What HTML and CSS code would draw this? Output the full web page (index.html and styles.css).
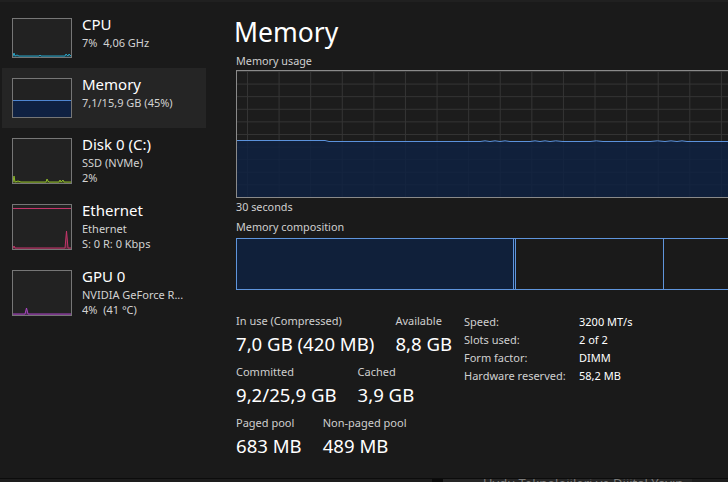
FILE: index.html
```html
<!DOCTYPE html>
<html lang="en">

<head>
    <meta charset="UTF-8">
    <meta name="viewport" content="width=device-width, initial-scale=1.0">
    <title>Task Manager - Performance</title>
    <link rel="stylesheet" href="styles.css">
</head>

<body>
    <div class="topbar"></div>
    <div class="app">
        <nav class="sidebar">
            <div class="perf-item">
                <div class="thumb">
                    <svg viewBox="0 0 58 38" preserveAspectRatio="none">
                        <polygon class="cpu-area" points="0,38 0,37 1,34 2,37 4,36 6,37 26,37 27,36 28,37 52,37 53,35 55,37 56,35 58,37 58,38"/>
                        <polyline class="cpu-line" points="0,37 1,34 2,37 4,36 6,37 26,37 27,36 28,37 52,37 53,35 55,37 56,35 58,37"/>
                    </svg>
                </div>
                <div class="perf-text">
                    <div class="perf-name">CPU</div>
                    <div class="perf-sub">7%&nbsp; 4,06 GHz</div>
                </div>
            </div>
            <div class="perf-item selected">
                <div class="thumb">
                    <svg viewBox="0 0 58 38" preserveAspectRatio="none">
                        <rect class="mem-area" x="0" y="21" width="58" height="17"/>
                        <line class="mem-line" x1="0" y1="21.5" x2="58" y2="21.5"/>
                    </svg>
                </div>
                <div class="perf-text">
                    <div class="perf-name">Memory</div>
                    <div class="perf-sub">7,1/15,9 GB (45%)</div>
                </div>
            </div>
            <div class="perf-item">
                <div class="thumb tall">
                    <svg viewBox="0 0 58 44" preserveAspectRatio="none">
                        <polygon class="disk-area" points="0,44 0,43 1,37 2,43 5,42 8,43 33,43 34,40 35,42 36,43 46,43 47,41 48,43 50,41 51,43 58,43 58,44"/>
                        <polyline class="disk-line" points="0,43 1,37 2,43 5,42 8,43 33,43 34,40 35,42 36,43 46,43 47,41 48,43 50,41 51,43 58,43"/>
                    </svg>
                </div>
                <div class="perf-text">
                    <div class="perf-name">Disk 0 (C:)</div>
                    <div class="perf-sub">SSD (NVMe)</div>
                    <div class="perf-sub">2%</div>
                </div>
            </div>
            <div class="perf-item">
                <div class="thumb tall">
                    <svg viewBox="0 0 58 44" preserveAspectRatio="none">
                        <line class="eth-line" x1="0" y1="3.5" x2="58" y2="3.5"/>
                        <polygon class="eth-area" points="0,44 0,43 1,41 2,43 52,43 53.5,26 55,43 58,43 58,44"/>
                        <polyline class="eth-line" points="0,43 1,41 2,43 52,43 53.5,26 55,43 58,43"/>
                    </svg>
                </div>
                <div class="perf-text">
                    <div class="perf-name">Ethernet</div>
                    <div class="perf-sub">Ethernet</div>
                    <div class="perf-sub">S: 0 R: 0 Kbps</div>
                </div>
            </div>
            <div class="perf-item">
                <div class="thumb tall">
                    <svg viewBox="0 0 58 44" preserveAspectRatio="none">
                        <polygon class="gpu-area" points="0,44 0,43 12,43 13.5,37 15,43 58,43 58,44"/>
                        <polyline class="gpu-line" points="0,43 12,43 13.5,37 15,43 58,43"/>
                    </svg>
                </div>
                <div class="perf-text">
                    <div class="perf-name">GPU 0</div>
                    <div class="perf-sub">NVIDIA GeForce R...</div>
                    <div class="perf-sub">4%&nbsp; (41 °C)</div>
                </div>
            </div>
        </nav>

        <main class="detail">
            <h1>Memory</h1>
            <div class="caption">Memory usage</div>
            <div class="usage-graph">
                <svg viewBox="0 0 630 126" preserveAspectRatio="none">
                    <path class="usage-area" d="M0 69.5 L88 69.5 L92 70.5 L243 70.5 Q248 69.2 253 70.5 Q258 69.2 263 70.5 Q268 69.2 273 70.5 L293 70.5 Q298 69.2 303 70.5 Q308 69.2 313 70.5 Q318 69.2 326 70.5 L353 70.5 Q359 69.2 366 70.5 L413 70.5 Q420 69.2 428 70.5 Q434 69.2 440 70.5 Q445 69.2 450 70.5 L630 70.5 L630 126 L0 126 Z"/>
                    <path class="usage-line" d="M0 69.5 L88 69.5 L92 70.5 L243 70.5 Q248 69.2 253 70.5 Q258 69.2 263 70.5 Q268 69.2 273 70.5 L293 70.5 Q298 69.2 303 70.5 Q308 69.2 313 70.5 Q318 69.2 326 70.5 L353 70.5 Q359 69.2 366 70.5 L413 70.5 Q420 69.2 428 70.5 Q434 69.2 440 70.5 Q445 69.2 450 70.5 L630 70.5"/>
                </svg>
            </div>
            <div class="caption caption-tight">30 seconds</div>
            <div class="caption">Memory composition</div>
            <div class="composition">
                <div class="seg seg-inuse"></div>
                <div class="seg seg-modified"></div>
                <div class="seg seg-standby"></div>
                <div class="seg seg-free"></div>
            </div>

            <div class="stats">
                <div class="stat-grid">
                    <div class="stat-row">
                        <div class="stat">
                            <div class="stat-label">In use (Compressed)</div>
                            <div class="stat-value">7,0 GB (420 MB)</div>
                        </div>
                        <div class="stat">
                            <div class="stat-label">Available</div>
                            <div class="stat-value">8,8 GB</div>
                        </div>
                    </div>
                    <div class="stat-row">
                        <div class="stat">
                            <div class="stat-label">Committed</div>
                            <div class="stat-value">9,2/25,9 GB</div>
                        </div>
                        <div class="stat">
                            <div class="stat-label">Cached</div>
                            <div class="stat-value">3,9 GB</div>
                        </div>
                    </div>
                    <div class="stat-row">
                        <div class="stat">
                            <div class="stat-label">Paged pool</div>
                            <div class="stat-value">683 MB</div>
                        </div>
                        <div class="stat">
                            <div class="stat-label">Non-paged pool</div>
                            <div class="stat-value">489 MB</div>
                        </div>
                    </div>
                </div>
                <dl class="props">
                    <dt>Speed:</dt><dd>3200 MT/s</dd>
                    <dt>Slots used:</dt><dd>2 of 2</dd>
                    <dt>Form factor:</dt><dd>DIMM</dd>
                    <dt>Hardware reserved:</dt><dd>58,2 MB</dd>
                </dl>
            </div>
        </main>
    </div>
    <div class="bottombar"><span class="caption-strip">Uydu Teknolojileri ve Dijital Yayın</span></div>
</body>

</html>
```

FILE: styles.css
```css
/* Reset */
* {
    margin: 0;
    padding: 0;
    box-sizing: border-box;
}

html,
body {
    height: 100%;
}

body {
    font-family: "Segoe UI", "Noto Sans", sans-serif;
    background-color: #1a1a1a;
    color: #fff;
    display: flex;
    flex-direction: column;
    overflow: hidden;
}

.topbar {
    flex: none;
    height: 2px;
    background-color: #202020;
}

.app {
    flex: 1;
    min-height: 0;
    display: flex;
}

/* Left list of devices */
.sidebar {
    flex: none;
    width: 206px;
    padding: 6px 0 0 2px;
}

.perf-item {
    display: flex;
    align-items: flex-start;
    gap: 10px;
    padding: 10px;
}

.perf-item.selected {
    background-color: #252525;
}

.thumb {
    flex: none;
    width: 60px;
    height: 40px;
    border: 1px solid #767676;
    background-color: #222;
}

.thumb.tall {
    height: 46px;
}

.thumb svg {
    display: block;
    width: 100%;
    height: 100%;
}

.cpu-line { fill: none; stroke: #27a0c2; stroke-width: 1; }
.cpu-area { fill: rgba(39, 160, 194, 0.25); }
.mem-area { fill: #0f2142; }
.mem-line { stroke: #4f86d2; stroke-width: 1; }
.disk-line { fill: none; stroke: #8db82a; stroke-width: 1; }
.disk-area { fill: rgba(141, 184, 42, 0.3); }
.eth-line { fill: none; stroke: #c4356a; stroke-width: 1; }
.eth-area { fill: rgba(196, 53, 106, 0.3); }
.gpu-line { fill: none; stroke: #a946c2; stroke-width: 1; }
.gpu-area { fill: rgba(169, 70, 194, 0.3); }

.perf-text {
    min-width: 0;
    margin: -4px 0 -1px;
}

.perf-name {
    font-size: 15px;
    line-height: 21px;
}

.perf-sub {
    font-size: 11px;
    line-height: 15px;
    color: #d2d2d2;
    white-space: nowrap;
}

/* Detail pane */
.detail {
    flex: 1;
    min-width: 0;
    padding: 14px 0 0 30px;
}

.detail h1 {
    font-size: 26.5px;
    font-weight: 400;
    line-height: 32px;
    margin-left: -2px;
}

.caption {
    font-size: 10.8px;
    line-height: 15px;
    color: #cfcfcf;
    margin-top: 5px;
    white-space: nowrap;
}

.caption-tight {
    margin-top: 1px;
}

.usage-graph {
    width: 632px;
    height: 128px;
    margin-top: 2px;
    border: 1px solid #8a8a8a;
    background-color: #1c1c1c;
    background-image:
        linear-gradient(to right, #343434 1px, transparent 1px),
        linear-gradient(to bottom, #343434 1px, transparent 1px);
    background-size: 31.6px 12.6px;
    background-position: 10px 0, 0 0;
}

.usage-graph svg {
    display: block;
    width: 630px;
    height: 126px;
}

.usage-area {
    fill: rgba(13, 33, 66, 0.82);
}

.usage-line {
    fill: none;
    stroke: #5b92dc;
    stroke-width: 1;
}

.composition {
    display: flex;
    width: 632px;
    height: 52px;
    margin-top: 4px;
}

.seg {
    border: 1px solid #5f95dc;
}

.seg-inuse {
    width: 278px;
    background-color: #10203a;
}

.seg-modified {
    width: 1px;
    border-left: 0;
    border-right: 0;
    background-color: #10203a;
}

.seg-standby {
    width: 149px;
}

.seg-free {
    flex: 1;
    border-left: 0;
}

/* Numbers under the graphs */
.stats {
    display: flex;
    align-items: flex-start;
    margin-top: 23px;
}

.stat-grid {
    flex: none;
    width: 228px;
}

.stat-row {
    display: flex;
    gap: 21px;
}

.stat-row + .stat-row {
    margin-top: 7px;
}

.stat-label {
    font-size: 11px;
    line-height: 16px;
    color: #cfcfcf;
    white-space: nowrap;
}

.stat-value {
    font-size: 18.6px;
    line-height: 26px;
    margin-top: 2px;
    white-space: nowrap;
}

.props {
    display: grid;
    grid-template-columns: 115px auto;
    font-size: 11px;
    line-height: 18px;
    white-space: nowrap;
}

.props dt {
    color: #d0d0d0;
}

.props dd {
    color: #fff;
}

.bottombar {
    flex: none;
    height: 4px;
    border-top: 1px solid #0c0c0c;
    background-color: #1d1d1d;
    overflow: hidden;
}

.caption-strip {
    display: block;
    width: 260px;
    height: 3px;
    margin-left: 432px;
    border-left: 11px solid #0b0b0b;
    padding-left: 40px;
    background-color: #262626;
    color: #7a7a7a;
    font-size: 13px;
    line-height: 8px;
    overflow: hidden;
    white-space: nowrap;
}
```
